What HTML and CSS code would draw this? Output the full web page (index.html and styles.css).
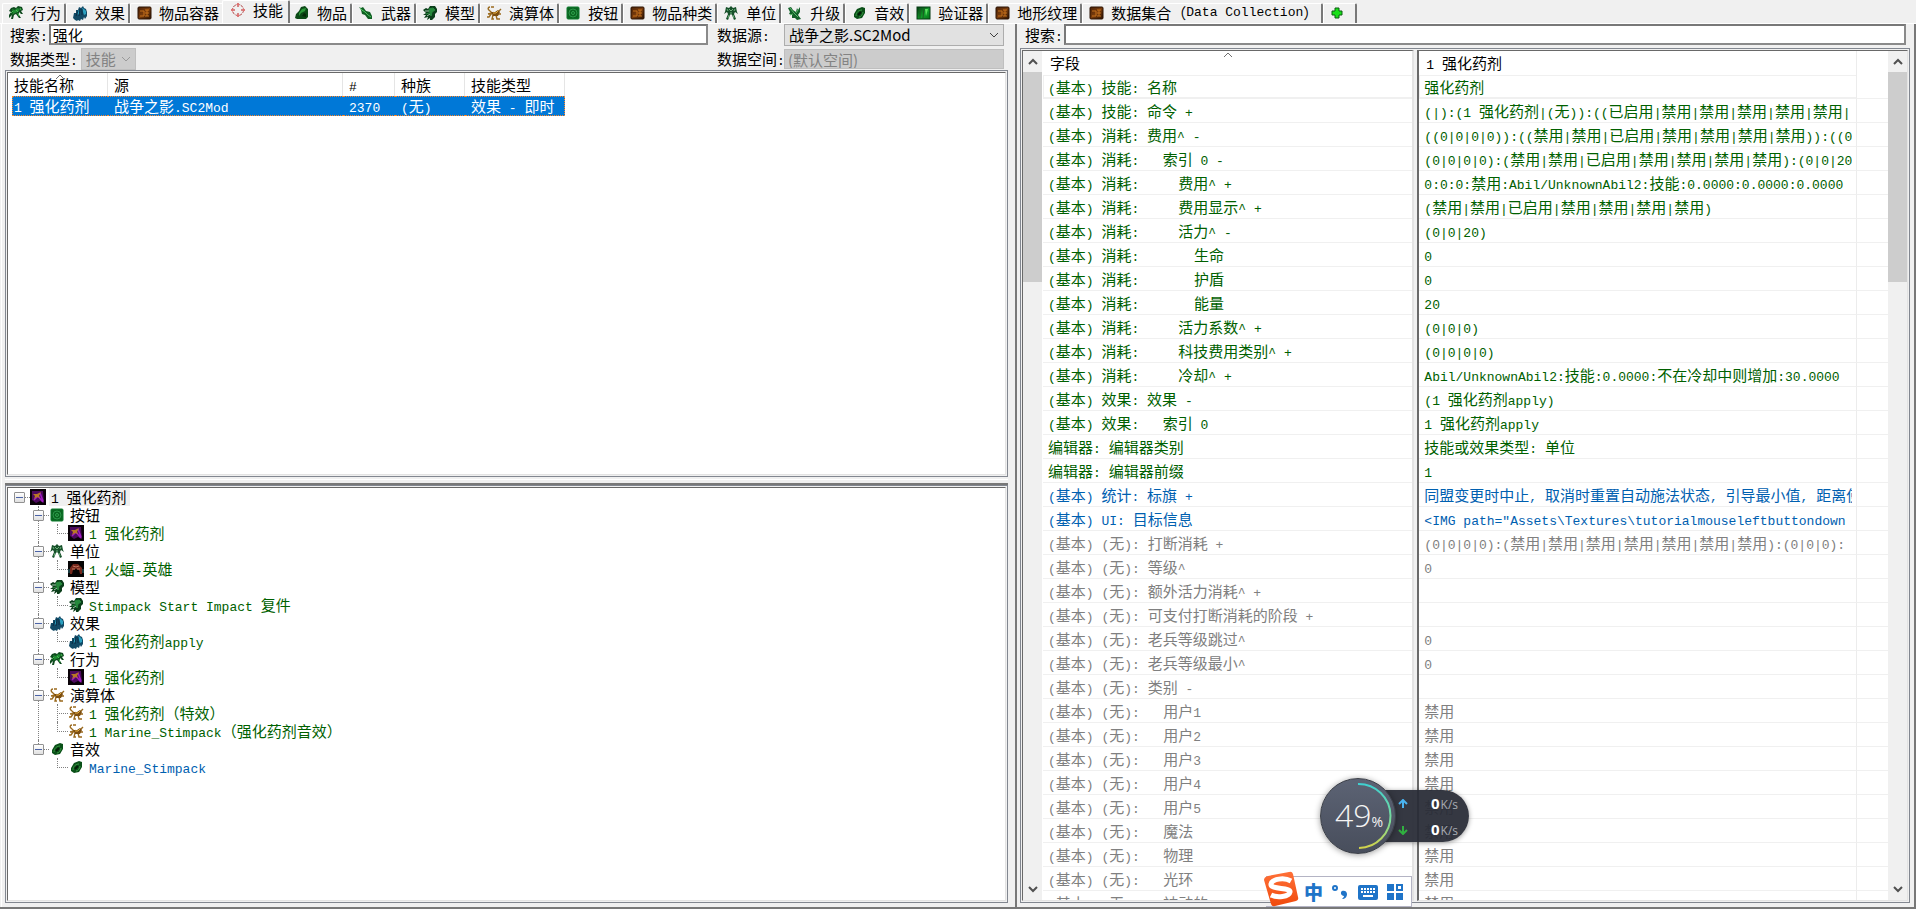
FILE: index.html
```html
<!DOCTYPE html>
<html lang="zh-CN">
<head>
<meta charset="utf-8">
<title>数据编辑器</title>
<link rel="stylesheet" href="styles.css">
</head>
<body>
<svg class="defs" aria-hidden="true">
  <defs>
    <linearGradient id="ring" x1="0" y1="0" x2="0" y2="1"><stop offset="0" stop-color="#3fd0d0"/><stop offset=".6" stop-color="#7fdc96"/><stop offset="1" stop-color="#d2d24a"/></linearGradient>
    <linearGradient id="sogou" x1="0" y1="0" x2="0" y2="1"><stop offset="0" stop-color="#ff7038"/><stop offset="1" stop-color="#f04a0c"/></linearGradient>
    <linearGradient id="brown" x1="0" y1="0" x2="1" y2="1"><stop offset="0" stop-color="#4a2106"/><stop offset=".5" stop-color="#7a3c0c"/><stop offset="1" stop-color="#2c1404"/></linearGradient>
    <linearGradient id="valid" x1="0" y1="0" x2="1" y2="1"><stop offset="0" stop-color="#043a10"/><stop offset=".6" stop-color="#12a02a"/><stop offset="1" stop-color="#067018"/></linearGradient>
    <symbol id="behavior" viewBox="0 0 16 16"><path d="M1 6l2-3 3-1 2 1 2-2 4 1 1 3-2 1 2 3-2 0-2-2 0 3 2 3-2 0-3-4-2 1-1 4-2 0 1-4-3 3 0-3 2-3z" fill="#0e4a1e"/><path d="M4 4l3 1 2-2 3 1-2 3-3 1-3 2 1-3z" fill="#1f8a32"/><path d="M8 5l2 2M5 6l-2 2M10 8l1 3M12 3l1 2" stroke="#45c050" fill="none"/></symbol>
    <symbol id="effect" viewBox="0 0 16 16"><path d="M1 13l1-5 2 0 0-3 2 0 1-3 2 1 2-2 1 2 2 1 1 3v4l-2 3-1-2-1 3-2-1-1 2-2-1-1 1-2-1z" fill="#124a66"/><path d="M10 3l2 1 2 2v3l-2 1-1-3zM5 7l2-2 1 3-2 2z" fill="#2aa0c0"/><path d="M4 11l2-5M7 11l1-7M10 10l0-6" stroke="#082c44" fill="none"/></symbol>
    <symbol id="box" viewBox="0 0 16 16"><rect x="2" y="2" width="13" height="12" rx="1" fill="url(#brown)" stroke="#2a1204"/><path d="M4 6h4v5H4M9 5h4M9 8h4M9 11h4M11 5v6" stroke="#c4701c" fill="none"/></symbol>
    <symbol id="ability" viewBox="0 0 16 16"><circle cx="8" cy="8" r="5.5" fill="none" stroke="#b04848" stroke-dasharray="3 1"/><path d="M8 1v4M8 11v4M1 8h4M11 8h4" stroke="#c01818"/><path d="M6 3l2-2 2 2zM6 13l2 2 2-2zM3 6L1 8l2 2zM13 6l2 2-2 2z" fill="#e07070"/></symbol>
    <symbol id="item" viewBox="0 0 16 16"><path d="M1 13l1-4 3-3 2-4 4-1 3 3 0 8-2 2H3z" fill="#0c4a16"/><path d="M5 8l3-4 4-1-1 3-4 2-2 3z" fill="#2c9a3a"/><path d="M8 11l2-3 2 1 0 3z" fill="#052a0a"/></symbol>
    <symbol id="weapon" viewBox="0 0 16 16"><path d="M1 2l2 1 2-1 3 4 4 1 2 4v3l-4 0-3-4-3-1-1-4z" fill="#116024"/><path d="M4 5l3 2 3 3 3 2M2 3l3 3" stroke="#4cc45c" fill="none"/></symbol>
    <symbol id="model" viewBox="0 0 16 16"><path d="M1 5l3-2 2 1 2-3 5 0 2 3 0 3-2 2 0 3-3 3-2 0 0-2-3 2 1-3-4 1 2-3-3 0 3-2z" fill="#0b3e1a"/><path d="M7 4l4-1 2 2-3 2-1 4-1-3zM4 9l3-1" fill="#268a3c" stroke="#268a3c"/><path d="M3 6h4M5 11l3-2" stroke="#9fc8a8" fill="none"/></symbol>
    <symbol id="actor" viewBox="0 0 16 16"><path d="M4 2C2 2 1 4 4 6l2 2M5 2l3 0M2 9l4-1-3 4-2 0M7 10l-1 4h2M10 10l1 4h3M12 7l3-3M12 9h3" stroke="#9a6a1e" stroke-width="1.4" fill="none"/><path d="M5 7l4 0 3-2 2 2-2 4-5 0z" fill="#7c4e10"/><path d="M7 8h3l2-2" stroke="#e8b040" fill="none"/></symbol>
    <symbol id="button" viewBox="0 0 16 16"><rect x="2" y="2" width="12" height="12" rx="1" fill="#0a6420" stroke="#0c7a2c"/><circle cx="8" cy="8" r="4" fill="none" stroke="#2a9848"/><circle cx="8" cy="8" r="1.5" fill="none" stroke="#2fa24c"/></symbol>
    <symbol id="unit" viewBox="0 0 16 16"><path d="M3 2l3 1 2-2 2 2 3-1 1 5 1 2-3-2-1 2 2 5-2 1-2-5-1-1-1 1-2 5-2-1 2-5-1-2-3 2 1-2z" fill="#16502a"/><path d="M6 4l2 2 2-2M7 8h2M6 10l-1 3M10 10l1 3M4 4l1 2M12 4l-1 2" stroke="#6cb07a" fill="none"/></symbol>
    <symbol id="upgrade" viewBox="0 0 16 16"><path d="M1 3l3-1 2 3 3 2 1-4 1 2 2-3 0 5-2 3 3 4-4 1-2-2-3 0 0-3-3-1 1-2z" fill="#12602a"/><path d="M3 3l4 5 4 4M9 8l2-3M6 9l-3 1" stroke="#58b868" fill="none"/></symbol>
    <symbol id="sound" viewBox="0 0 16 16"><path d="M3 9l3-5 5-2 3 1 0 5-3 5-5 1-3-2z" fill="#0a5018"/><path d="M5 11c0-4 3-6 6-6M8 12c2 0 4-3 4-5" stroke="#3a9a44" fill="none"/><path d="M7 10l3-3" stroke="#021c06" stroke-width="2"/></symbol>
    <symbol id="validator" viewBox="0 0 16 16"><rect x="2" y="2" width="13" height="12" fill="url(#valid)" stroke="#043a12"/><path d="M5 3v10M9 3l-1 10" stroke="#1c5c22"/><path d="M10 4l3 0-2 7z" fill="#5ce060"/></symbol>
    <symbol id="plus" viewBox="0 0 16 16"><path d="M6 3h4v3h3v4h-3v3H6v-3H3V6h3z" fill="#18e018" stroke="#0a5c10"/></symbol>
    <symbol id="stim" viewBox="0 0 16 16"><path d="M0 0h16v16H0z" fill="#0a0208"/><path d="M2 2l11 0 1 12-4-2-4 2-4-3z" fill="#4c0a5c"/><path d="M4 11l4-4 5 6M10 4l3 8" stroke="#a01cc0" stroke-width="1.500" fill="none"/><path d="M3 5l4 0 4-2-2 4 1 2-3-1-3 2 1-3z" fill="#b87824"/></symbol>
    <symbol id="firebat" viewBox="0 0 16 16"><path d="M0 0h16v16H0z" fill="#060404"/><path d="M2 13l0-6 3-4 5 0 4 4v6h-2l-1-4-3-1-3 1-1 4z" fill="#74281c"/><path d="M5 5l3 1 3-1M4 8l3 0M9 8l3 0" stroke="#c47860" fill="none"/><path d="M1 8v4M15 8v4" stroke="#2c7480"/></symbol>
    <symbol id="caret" viewBox="0 0 10 6"><path d="M1 5l4-4 4 4" fill="none" stroke="currentColor"/></symbol>
    <symbol id="chev" viewBox="0 0 10 6"><path d="M1 1l4 4 4-4" fill="none" stroke="currentColor"/></symbol>
    <symbol id="arrow" viewBox="0 0 10 7"><path d="M1 6l4-4 4 4" fill="none" stroke="#505050" stroke-width="2"/></symbol>
  </defs>
</svg>

<nav class="tabs" role="tablist">
  <button class="tab" role="tab"><svg><use href="#behavior"/></svg>行为</button>
  <button class="tab" role="tab"><svg><use href="#effect"/></svg>效果</button>
  <button class="tab" role="tab"><svg><use href="#box"/></svg>物品容器</button>
  <button class="tab active" role="tab" aria-selected="true"><svg><use href="#ability"/></svg>技能</button>
  <button class="tab" role="tab"><svg><use href="#item"/></svg>物品</button>
  <button class="tab" role="tab"><svg><use href="#weapon"/></svg>武器</button>
  <button class="tab" role="tab"><svg><use href="#model"/></svg>模型</button>
  <button class="tab" role="tab"><svg><use href="#actor"/></svg>演算体</button>
  <button class="tab" role="tab"><svg><use href="#button"/></svg>按钮</button>
  <button class="tab" role="tab"><svg><use href="#box"/></svg>物品种类</button>
  <button class="tab" role="tab"><svg><use href="#unit"/></svg>单位</button>
  <button class="tab" role="tab"><svg><use href="#upgrade"/></svg>升级</button>
  <button class="tab" role="tab"><svg><use href="#sound"/></svg>音效</button>
  <button class="tab" role="tab"><svg><use href="#validator"/></svg>验证器</button>
  <button class="tab" role="tab"><svg><use href="#box"/></svg>地形纹理</button>
  <button class="tab" role="tab"><svg><use href="#box"/></svg>数据集合（Data Collection）</button>
  <button class="tab add" role="tab" aria-label="添加"><svg><use href="#plus"/></svg></button>
</nav>

<main class="page">
  <section class="left">
    <form class="filters">
      <div class="field"><label for="q">搜索:</label><input id="q" class="text" type="text" value="强化"></div>
      <label for="src">数据源:</label>
      <span class="combo"><select id="src"><option>战争之影.SC2Mod</option></select><svg><use href="#chev"/></svg></span>
      <div class="field"><label for="type">数据类型:</label><span class="combo small"><select id="type" disabled><option>技能</option></select><svg><use href="#chev"/></svg></span></div>
      <label for="space">数据空间:</label>
      <input id="space" class="disabled" type="text" value="(默认空间)" disabled>
    </form>
    <div class="frame list"><div class="well">
      <table class="objects">
        <thead><tr><th class="c1">技能名称<svg class="sort"><use href="#caret"/></svg></th><th class="c2">源</th><th class="c3">#</th><th class="c4">种族</th><th class="c5">技能类型</th></tr></thead>
        <tbody><tr><td>1 强化药剂</td><td>战争之影.SC2Mod</td><td>2370</td><td>(无)</td><td>效果 - 即时</td></tr></tbody>
      </table>
    </div></div>
    <div class="splitter"></div>
    <div class="frame explorer"><div class="well">
      <ul class="tree">
        <li><div class="node root"><button class="toggle" aria-label="折叠"></button><svg><use href="#stim"/></svg><span>1 强化药剂</span></div>
          <ul>
            <li><div class="node"><button class="toggle" aria-label="折叠"></button><svg><use href="#button"/></svg><span>按钮</span></div>
              <ul><li><div class="node leaf"><svg><use href="#stim"/></svg><span>1 强化药剂</span></div></li></ul></li>
            <li><div class="node"><button class="toggle" aria-label="折叠"></button><svg><use href="#unit"/></svg><span>单位</span></div>
              <ul><li><div class="node leaf"><svg><use href="#firebat"/></svg><span>1 火蝠-英雄</span></div></li></ul></li>
            <li><div class="node"><button class="toggle" aria-label="折叠"></button><svg><use href="#model"/></svg><span>模型</span></div>
              <ul><li><div class="node leaf"><svg><use href="#model"/></svg><span>Stimpack Start Impact 复件</span></div></li></ul></li>
            <li><div class="node"><button class="toggle" aria-label="折叠"></button><svg><use href="#effect"/></svg><span>效果</span></div>
              <ul><li><div class="node leaf"><svg><use href="#effect"/></svg><span>1 强化药剂apply</span></div></li></ul></li>
            <li><div class="node"><button class="toggle" aria-label="折叠"></button><svg><use href="#behavior"/></svg><span>行为</span></div>
              <ul><li><div class="node leaf"><svg><use href="#stim"/></svg><span>1 强化药剂</span></div></li></ul></li>
            <li><div class="node"><button class="toggle" aria-label="折叠"></button><svg><use href="#actor"/></svg><span>演算体</span></div>
              <ul><li><div class="node leaf"><svg><use href="#actor"/></svg><span>1 强化药剂（特效）</span></div></li>
              <li><div class="node leaf"><svg><use href="#actor"/></svg><span>1 Marine_Stimpack（强化药剂音效）</span></div></li></ul></li>
            <li><div class="node"><button class="toggle" aria-label="折叠"></button><svg><use href="#sound"/></svg><span>音效</span></div>
              <ul><li><div class="node leaf blue"><svg><use href="#sound"/></svg><span>Marine_Stimpack</span></div></li></ul></li>
          </ul></li>
      </ul>
    </div></div>
  </section>

  <section class="right">
    <form class="field"><label for="fq">搜索:</label><input id="fq" class="text" type="text"></form>
    <div class="frame details">
      <div class="well fields">
        <div class="scroll"><button aria-label="向上"><svg><use href="#arrow"/></svg></button><div class="track"><div class="thumb"></div></div><button class="down" aria-label="向下"><svg><use href="#arrow"/></svg></button></div>
        <div class="clip"><table class="rows">
          <thead><tr><th>字段<svg class="sort"><use href="#caret"/></svg></th></tr></thead>
          <tbody class="green">
            <tr class="focus"><td>(基本) 技能: 名称</td></tr>
            <tr><td>(基本) 技能: 命令 +</td></tr>
            <tr><td>(基本) 消耗: 费用^ -</td></tr>
            <tr><td>(基本) 消耗:   索引 0 -</td></tr>
            <tr><td>(基本) 消耗:     费用^ +</td></tr>
            <tr><td>(基本) 消耗:     费用显示^ +</td></tr>
            <tr><td>(基本) 消耗:     活力^ -</td></tr>
            <tr><td>(基本) 消耗:       生命</td></tr>
            <tr><td>(基本) 消耗:       护盾</td></tr>
            <tr><td>(基本) 消耗:       能量</td></tr>
            <tr><td>(基本) 消耗:     活力系数^ +</td></tr>
            <tr><td>(基本) 消耗:     科技费用类别^ +</td></tr>
            <tr><td>(基本) 消耗:     冷却^ +</td></tr>
            <tr><td>(基本) 效果: 效果 -</td></tr>
            <tr><td>(基本) 效果:   索引 0</td></tr>
            <tr><td>编辑器: 编辑器类别</td></tr>
            <tr><td>编辑器: 编辑器前缀</td></tr>
          </tbody>
          <tbody class="blue">
            <tr><td>(基本) 统计: 标旗 +</td></tr>
            <tr><td>(基本) UI: 目标信息</td></tr>
          </tbody>
          <tbody class="gray">
            <tr><td>(基本) (无): 打断消耗 +</td></tr>
            <tr><td>(基本) (无): 等级^</td></tr>
            <tr><td>(基本) (无): 额外活力消耗^ +</td></tr>
            <tr><td>(基本) (无): 可支付打断消耗的阶段 +</td></tr>
            <tr><td>(基本) (无): 老兵等级跳过^</td></tr>
            <tr><td>(基本) (无): 老兵等级最小^</td></tr>
            <tr><td>(基本) (无): 类别 -</td></tr>
            <tr><td>(基本) (无):   用户1</td></tr>
            <tr><td>(基本) (无):   用户2</td></tr>
            <tr><td>(基本) (无):   用户3</td></tr>
            <tr><td>(基本) (无):   用户4</td></tr>
            <tr><td>(基本) (无):   用户5</td></tr>
            <tr><td>(基本) (无):   魔法</td></tr>
            <tr><td>(基本) (无):   物理</td></tr>
            <tr><td>(基本) (无):   光环</td></tr>
            <tr><td>(基本) (无):   被动的</td></tr>
          </tbody>
        </table></div>
      </div>
      <div class="well values">
        <div class="clip"><table class="rows">
          <colgroup><col><col class="rest"></colgroup>
          <thead><tr><th>1 强化药剂</th><th></th></tr></thead>
          <tbody class="green">
            <tr class="focus"><td><div>强化药剂</div></td><td></td></tr>
            <tr><td><div>(|):(1 强化药剂|(无)):((已启用|禁用|禁用|禁用|禁用|禁用|</div></td><td></td></tr>
            <tr><td><div>((0|0|0|0)):((禁用|禁用|已启用|禁用|禁用|禁用|禁用)):((0</div></td><td></td></tr>
            <tr><td><div>(0|0|0|0):(禁用|禁用|已启用|禁用|禁用|禁用|禁用):(0|0|20</div></td><td></td></tr>
            <tr><td><div>0:0:0:禁用:Abil/UnknownAbil2:技能:0.0000:0.0000:0.0000</div></td><td></td></tr>
            <tr><td><div>(禁用|禁用|已启用|禁用|禁用|禁用|禁用)</div></td><td></td></tr>
            <tr><td><div>(0|0|20)</div></td><td></td></tr>
            <tr><td><div>0</div></td><td></td></tr>
            <tr><td><div>0</div></td><td></td></tr>
            <tr><td><div>20</div></td><td></td></tr>
            <tr><td><div>(0|0|0)</div></td><td></td></tr>
            <tr><td><div>(0|0|0|0)</div></td><td></td></tr>
            <tr><td><div>Abil/UnknownAbil2:技能:0.0000:不在冷却中则增加:30.0000</div></td><td></td></tr>
            <tr><td><div>(1 强化药剂apply)</div></td><td></td></tr>
            <tr><td><div>1 强化药剂apply</div></td><td></td></tr>
            <tr><td><div>技能或效果类型: 单位</div></td><td></td></tr>
            <tr><td><div>1</div></td><td></td></tr>
          </tbody>
          <tbody class="blue">
            <tr><td><div>同盟变更时中止, 取消时重置自动施法状态, 引导最小值, 距离使</div></td><td></td></tr>
            <tr><td><div>&lt;IMG path="Assets\Textures\tutorialmouseleftbuttondown</div></td><td></td></tr>
          </tbody>
          <tbody class="gray">
            <tr><td><div>(0|0|0|0):(禁用|禁用|禁用|禁用|禁用|禁用|禁用):(0|0|0):</div></td><td></td></tr>
            <tr><td><div>0</div></td><td></td></tr>
            <tr><td></td><td></td></tr>
            <tr><td></td><td></td></tr>
            <tr><td><div>0</div></td><td></td></tr>
            <tr><td><div>0</div></td><td></td></tr>
            <tr><td></td><td></td></tr>
            <tr><td><div>禁用</div></td><td></td></tr>
            <tr><td><div>禁用</div></td><td></td></tr>
            <tr><td><div>禁用</div></td><td></td></tr>
            <tr><td><div>禁用</div></td><td></td></tr>
            <tr><td><div>禁用</div></td><td></td></tr>
            <tr><td><div>禁用</div></td><td></td></tr>
            <tr><td><div>禁用</div></td><td></td></tr>
            <tr><td><div>禁用</div></td><td></td></tr>
            <tr><td><div>禁用</div></td><td></td></tr>
          </tbody>
        </table></div>
        <div class="scroll"><button aria-label="向上"><svg><use href="#arrow"/></svg></button><div class="track"><div class="thumb"></div></div><button class="down" aria-label="向下"><svg><use href="#arrow"/></svg></button></div>
      </div>
    </div>
  </section>
</main>

<aside class="meter">
  <div class="speeds">
    <div class="speed"><svg viewBox="0 0 10 10"><path d="M5 9V2M1 5l4-4 4 4" fill="none" stroke="#4ab4f0" stroke-width="2"/></svg><b>0</b>K/s</div>
    <div class="speed"><svg viewBox="0 0 10 10"><path d="M5 1v7M1 5l4 4 4-4" fill="none" stroke="#30b040" stroke-width="2"/></svg><b>0</b>K/s</div>
  </div>
  <div class="dial"><svg viewBox="0 0 76 76"><path d="M38 6a32 32 0 0 1 1 64" fill="none" stroke="url(#ring)" stroke-width="2"/></svg><span class="num">49</span><span class="pct">%</span></div>
</aside>

<aside class="ime">
  <svg class="logo" viewBox="0 0 36 36"><path d="M5 5L26 1q3-1 4 2l5 23q1 3-2 4l-21 5q-3 1-4-2L1 9q0-3 4-4z" fill="url(#sogou)"/><path d="M28 10c-7-4-19-2-20 3-1 6 20 3 19 8-1 5-13 6-19 3" fill="none" stroke="#fff" stroke-width="5"/></svg>
  <button class="zh">中</button>
  <button aria-label="标点"><svg viewBox="0 0 18 18"><circle cx="4" cy="5" r="2" fill="none" stroke="#1f74c8" stroke-width="2"/><path d="M11 8c2-1 5 0 5 3s-2 5-5 5c1-1 2-2 2-3-3 0-4-4-2-5z" fill="#1f74c8"/></svg></button>
  <button aria-label="软键盘"><svg class="kbd" viewBox="0 0 20 18"><rect y="2" width="20" height="15" rx="2" fill="#1f74c8"/><path d="M3 6h14M3 9h14" stroke="#fff" stroke-width="2" stroke-dasharray="2 1"/><path d="M5 13h10" stroke="#fff" stroke-width="2"/></svg></button>
  <button aria-label="工具箱"><svg viewBox="0 0 18 18"><path d="M1 1h7v7H1zM1 10h7v7H1zM10 10h7v7h-7z" fill="#1f74c8"/><rect x="11" y="2" width="5" height="5" fill="#fff" stroke="#1f74c8" stroke-width="2"/></svg></button>
</aside>
<script src="latin.js"></script>
</body>
</html>
```
FILE: styles.css
```css
* { box-sizing: border-box; }
html, body { height: 100%; }
body {
  margin: 0;
  display: flex;
  flex-direction: column;
  position: relative;
  overflow: hidden;
  background: #f0f0f0;
  color: #000;
  font: 15px/18px "Noto Sans CJK SC", "Liberation Sans", sans-serif;
}
button, input, select { font: inherit; color: inherit; margin: 0; }
button { border: 0; padding: 0; background: none; }
ul { list-style: none; margin: 0; padding: 0; }
.defs { position: absolute; width: 0; height: 0; }
.latin { font-family: "Liberation Mono", monospace; font-size: 13px; line-height: 1; white-space: pre; }

/* tab strip */
.tabs { display: flex; align-items: flex-end; height: 23px; padding-left: 2px; flex: none; }
.tab {
  display: flex;
  align-items: center;
  height: 20px;
  padding: 0 3px 2px 5px;
  border: solid;
  border-width: 1px 2px 0 1px;
  border-color: #fff #787878 #fff #fff;
  border-radius: 2px 2px 0 0;
  white-space: nowrap;
}
.tab svg { width: 16px; height: 16px; margin-right: 7px; flex: none; }
.tab.active { height: 23px; margin: 0 -2px; padding: 0 5px 4px 7px; background: #f0f0f0; z-index: 1; }
.tab.add { padding: 0 7px 1px 5px; }
.tab.add svg { margin-right: 3px; }

/* page */
.page {
  flex: 1;
  min-height: 0;
  display: grid;
  grid-template-columns: 1017fr 899fr;
  border-top: 1px solid #fff;
  border-bottom: 2px solid #787878;
}
.left, .right { display: flex; flex-direction: column; min-width: 0; min-height: 0; }
.left { margin-left: 1px; padding: 0 7px 4px 3px; border-left: 1px solid #fff; border-right: 2px solid #787878; }
.right { padding: 0 4px 4px 3px; gap: 3px; border-right: 2px solid #787878; }
.filters {
  display: grid;
  grid-template: 22px 22px / 1fr 61px 220px;
  gap: 2px 6px;
  padding: 0 4px 0 5px;
  flex: none;
}
.filters label, .right label { line-height: 22px; white-space: nowrap; }
.field { display: flex; min-width: 0; gap: 1px; margin-right: 3px; }
.field .text { flex: 1; }
.text {
  min-width: 0;
  height: 21px;
  padding: 0 2px;
  border: 2px solid;
  border-color: #787878 #8a8a8a #8a8a8a #787878;
  border-radius: 0;
  background: #fff;
}
.right .field { height: 21px; margin: 0; padding: 0 4px 0 5px; flex: none; }
.combo { position: relative; display: block; }
.combo select { appearance: none; width: 100%; height: 22px; padding: 0 4px; border: 1px solid #adadad; border-radius: 0; background: #e1e1e1; }
.combo svg { position: absolute; right: 5px; top: 8px; width: 10px; height: 6px; color: #404040; pointer-events: none; }
.combo.small { width: 55px; margin-left: 2px; }
.combo.small svg { color: #999; }
.combo select:disabled { background: #ccc; border-color: #bfbfbf; color: #838383; opacity: 1; }
.disabled { width: 100%; height: 20px; padding: 0 3px; border: 1px solid #bfbfbf; background: #ccc; color: #838383; align-self: center; min-width: 0; }

/* sunken frames */
.frame { border: 1px solid #828790; padding: 1px; display: flex; min-height: 0; min-width: 0; }
.well { flex: 1; min-width: 0; background: #fff; border: 1px solid; border-color: #696969 #e3e3e3 #e3e3e3 #696969; overflow: hidden; }
.list { flex: 407 0 0; }
.explorer { flex: 418 0 0; }
.splitter { flex: none; height: 8px; border-bottom: 2px solid #787878; background: linear-gradient(#f0f0f0 2px, #fff 2px, #fff 3px, #f0f0f0 3px); }

/* object list */
table { border-collapse: separate; border-spacing: 0; table-layout: fixed; }
th { font-weight: 400; text-align: left; }
th, td { padding: 0; white-space: pre; overflow: hidden; }
.objects { width: 557px; padding-left: 4px; }
.objects th { position: relative; height: 23px; padding-left: 6px; border-right: 1px solid #e5e5e5; }
.objects th:first-child, .objects td:first-child { padding-left: 2px; }
.objects td { height: 19px; padding-left: 6px; background: #0078d7; color: #fff; border: 1px dotted #ff8728; border-width: 1px 0; line-height: 17px; }
.objects td:first-child { border-left-width: 1px; padding-left: 1px; }
.objects td:last-child { border-right-width: 1px; }
.c1 { width: 96px; } .c2 { width: 235px; } .c3 { width: 52px; } .c4 { width: 70px; } .c5 { width: 100px; }
.sort { position: absolute; left: 50%; top: 1px; width: 10px; height: 6px; margin-left: -5px; color: #707070; }

/* tree */
.tree { padding-left: 6px; }
.tree li { position: relative; }
.tree ul { padding-left: 19px; }
.tree ul > li::before { content: ""; position: absolute; left: 5px; top: 0; bottom: 0; border-left: 1px dotted #808080; }
.tree ul > li:last-child::before { bottom: auto; height: 10px; }
.node { display: flex; align-items: center; height: 18px; position: relative; white-space: pre; }
.node svg { width: 16px; height: 16px; margin-left: 5px; }
.node > span { margin-left: 3px; padding: 0 3px 0 2px; line-height: 18px; }
.root > span { background: #f0f0f0; }
.node::before { content: ""; position: absolute; left: 11px; width: 5px; top: 9px; border-top: 1px dotted #808080; }
.leaf::before { left: 5px; width: 11px; }
.leaf { color: #006000; }
.leaf svg { margin-left: 16px; }
.node.blue { color: #0060b0; }
.toggle { width: 11px; height: 11px; border: 1px solid #919191; border-radius: 1px; background: linear-gradient(#4b63a7, #4b63a7) center / 7px 1px no-repeat, linear-gradient(#fff, #e0e0e0); position: relative; }

/* detail panes */
.details { flex: 1; gap: 3px; }
.fields, .values { display: flex; }
.fields { flex: 392 0 0; border-right-width: 2px; }
.values { flex: 491 0 0; border-left-width: 2px; }
.clip { flex: 1; min-width: 0; overflow: hidden; height: 0; min-height: 100%; }
.fields .clip { margin-left: 1px; }
.rows { width: 100%; }
.rows th { position: relative; height: 24px; padding-left: 7px; }
.rows td { height: 24px; padding: 0 4px 0 5px; border-bottom: 1px solid #f0f0f0; }
.rows td div { overflow: hidden; height: 20px; line-height: 20px; }
.values th:first-child, .values td:first-child { border-right: 1px solid #ececec; }
.rest { width: 31px; }
.focus td:first-child { box-shadow: inset 1px 1px #f0f0f0, inset 0 -1px #f0f0f0; }
.green { color: #006000; }
.blue { color: #0060b0; }
.gray { color: #808080; }
.scroll { width: 19px; display: flex; flex-direction: column; background: #f0f0f0; flex: none; }
.scroll button { height: 21px; display: grid; place-items: center; }
.scroll svg { width: 10px; height: 7px; }
.down svg { transform: rotate(180deg); }
.track { flex: 1; }
.thumb { height: 26%; background: #cdcdcd; }

/* floating traffic meter */
.meter { position: absolute; right: 446px; bottom: 55px; width: 150px; height: 76px; z-index: 2; font-family: "Open Sans", sans-serif; }
.dial { position: absolute; left: 0; top: 0; width: 76px; height: 76px; border-radius: 50%; border: 1px solid #3c4048; background: linear-gradient(#5c6374, #484e5c); box-shadow: 0 1px 6px #0006; color: #f4f4f4; display: flex; align-items: baseline; padding-left: 14px; line-height: 72px; }
.dial svg { position: absolute; inset: -1px; }
.num { font-size: 32px; font-weight: 300; }
.pct { font-size: 14px; }
.speeds { position: absolute; left: 38px; right: 1px; top: 12px; height: 52px; border-radius: 0 26px 26px 0; background: #282c36f0; box-shadow: 0 1px 5px #0006; display: grid; grid-template-rows: 26px 26px; color: #a8abb2; font-size: 12px; }
.speed { display: flex; align-items: baseline; justify-content: flex-end; padding-right: 11px; line-height: 26px; }
.speed svg { width: 10px; height: 10px; margin-right: 23px; }
.speed b { font-size: 15px; color: #fff; margin-right: 1px; }

/* input method bar */
.ime { position: absolute; right: 504px; bottom: 2px; height: 31px; width: 146px; padding: 0 7px 0 38px; display: flex; align-items: center; justify-content: space-between; z-index: 2; background: linear-gradient(#fff, #fff) right / 134px 100% no-repeat; border: solid #b4b4c4; border-width: 1px 1px 1px 0; }
.ime button { display: block; height: 20px; color: #1f74c8; }
.ime svg { width: 18px; height: 18px; display: block; }
.ime .kbd { width: 20px; }
.ime .logo { position: absolute; left: -3px; bottom: -1px; width: 36px; height: 36px; }
.ime .zh { font-size: 19px; font-weight: 900; line-height: 20px; }
```
FILE: latin.js
```js
// Sets runs of Latin text in the monospaced face, at half the width of an ideograph.
const walker = document.createTreeWalker(document.body, NodeFilter.SHOW_TEXT);
const nodes = [];
while (walker.nextNode()) {
  const node = walker.currentNode;
  if (node.data.trim() && !node.parentElement.closest("select, script, svg, .meter")) nodes.push(node);
}
for (const node of nodes) {
  const parts = node.data.split(/([\x20-\x7e]+)/).filter(Boolean);
  const out = document.createDocumentFragment();
  for (const part of parts) {
    if (/^[\x20-\x7e]+$/.test(part)) {
      const span = document.createElement("span");
      span.className = "latin";
      span.textContent = part;
      out.append(span);
    } else {
      out.append(part);
    }
  }
  node.replaceWith(out);
}
```
